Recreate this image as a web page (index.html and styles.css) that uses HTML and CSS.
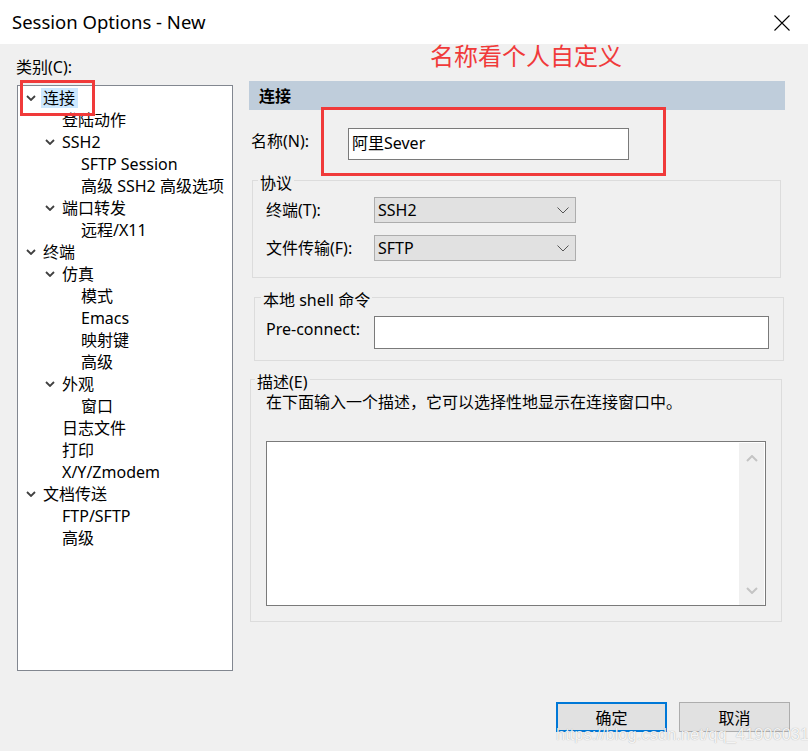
FILE: index.html
```html
<!DOCTYPE html>
<html lang="zh-CN">
<head>
<meta charset="utf-8">
<title>Session Options - New</title>
<link rel="stylesheet" href="styles.css">
</head>
<body>
<div class="window">
  <header class="titlebar">
    <span class="title">Session Options - New</span>
    <span class="close"><svg width="16" height="16" viewBox="0 0 16 16"><path d="M0.5 0.5 L15.5 15.5 M15.5 0.5 L0.5 15.5" stroke="#000" stroke-width="1.1" fill="none"/></svg></span>
  </header>

  <main class="content">
    <section class="category">
      <div class="cat-label">类别(C):</div>
      <div class="tree">
        <div class="row lvl0"><span class="chev"><svg width="10" height="6" viewBox="0 0 10 6"><path d="M1 1 L5 5 L9 1" stroke="#404040" stroke-width="1.8" fill="none"/></svg></span><span class="sel">连接</span></div>
        <div class="row lvl1"><span class="sp"></span>登陆动作</div>
        <div class="row lvl1"><span class="chev"><svg width="10" height="6" viewBox="0 0 10 6"><path d="M1 1 L5 5 L9 1" stroke="#404040" stroke-width="1.8" fill="none"/></svg></span>SSH2</div>
        <div class="row lvl2"><span class="sp"></span>SFTP Session</div>
        <div class="row lvl2"><span class="sp"></span>高级 SSH2 高级选项</div>
        <div class="row lvl1"><span class="chev"><svg width="10" height="6" viewBox="0 0 10 6"><path d="M1 1 L5 5 L9 1" stroke="#404040" stroke-width="1.8" fill="none"/></svg></span>端口转发</div>
        <div class="row lvl2"><span class="sp"></span>远程/X11</div>
        <div class="row lvl0"><span class="chev"><svg width="10" height="6" viewBox="0 0 10 6"><path d="M1 1 L5 5 L9 1" stroke="#404040" stroke-width="1.8" fill="none"/></svg></span>终端</div>
        <div class="row lvl1"><span class="chev"><svg width="10" height="6" viewBox="0 0 10 6"><path d="M1 1 L5 5 L9 1" stroke="#404040" stroke-width="1.8" fill="none"/></svg></span>仿真</div>
        <div class="row lvl2"><span class="sp"></span>模式</div>
        <div class="row lvl2"><span class="sp"></span>Emacs</div>
        <div class="row lvl2"><span class="sp"></span>映射键</div>
        <div class="row lvl2"><span class="sp"></span>高级</div>
        <div class="row lvl1"><span class="chev"><svg width="10" height="6" viewBox="0 0 10 6"><path d="M1 1 L5 5 L9 1" stroke="#404040" stroke-width="1.8" fill="none"/></svg></span>外观</div>
        <div class="row lvl2"><span class="sp"></span>窗口</div>
        <div class="row lvl1"><span class="sp"></span>日志文件</div>
        <div class="row lvl1"><span class="sp"></span>打印</div>
        <div class="row lvl1"><span class="sp"></span>X/Y/Zmodem</div>
        <div class="row lvl0"><span class="chev"><svg width="10" height="6" viewBox="0 0 10 6"><path d="M1 1 L5 5 L9 1" stroke="#404040" stroke-width="1.8" fill="none"/></svg></span>文档传送</div>
        <div class="row lvl1"><span class="sp"></span>FTP/SFTP</div>
        <div class="row lvl1"><span class="sp"></span>高级</div>
      </div>
    </section>

    <section class="panel">
      <div class="panel-head">连接</div>
      <div class="name-row">
        <label class="lbl name-lbl">名称(N):</label>
        <div class="textbox name-box">阿里Sever</div>
      </div>

      <fieldset class="group g-proto">
        <legend>协议</legend>
        <div class="field">
          <label class="lbl field-lbl">终端(T):</label>
          <div class="combo"><span>SSH2</span><svg width="12" height="7" viewBox="0 0 12 7"><path d="M0.5 0.5 L6 6 L11.5 0.5" stroke="#555" stroke-width="1" fill="none"/></svg></div>
        </div>
        <div class="field">
          <label class="lbl field-lbl">文件传输(F):</label>
          <div class="combo"><span>SFTP</span><svg width="12" height="7" viewBox="0 0 12 7"><path d="M0.5 0.5 L6 6 L11.5 0.5" stroke="#555" stroke-width="1" fill="none"/></svg></div>
        </div>
      </fieldset>

      <fieldset class="group g-shell">
        <legend>本地 shell 命令</legend>
        <div class="field">
          <label class="lbl field-lbl pre-lbl">Pre-connect:</label>
          <div class="textbox pre-box"></div>
        </div>
      </fieldset>

      <fieldset class="group g-desc">
        <legend>描述(E)</legend>
        <div class="desc-text">在下面输入一个描述，它可以选择性地显示在连接窗口中。</div>
        <div class="memo">
          <div class="memo-area"></div>
          <div class="vscroll">
            <svg width="12" height="7" viewBox="0 0 12 7"><path d="M1 6 L6 1 L11 6" stroke="#c4c4c4" stroke-width="2" fill="none"/></svg>
            <svg width="12" height="7" viewBox="0 0 12 7"><path d="M1 1 L6 6 L11 1" stroke="#c4c4c4" stroke-width="2" fill="none"/></svg>
          </div>
        </div>
      </fieldset>
    </section>
  </main>

  <footer class="buttons">
    <button class="btn btn-default">确定</button>
    <button class="btn">取消</button>
  </footer>

  <div class="annotation">名称看个人自定义</div>
  <div class="mark mark-tree"></div>
  <div class="mark mark-name"></div>
  <div class="watermark">https://blog.csdn.net/qq_41906031</div>
</div>
</body>
</html>
```

FILE: styles.css
```css
* { box-sizing: border-box; }

html, body {
  margin: 0;
  padding: 0;
}

body {
  background: #f0f0f0;
  font-family: "Noto Sans", "Noto Sans CJK SC", sans-serif;
  font-size: 16px;
  line-height: 20px;
  color: #000;
}

.window {
  position: relative;
  width: 808px;
  height: 751px;
  overflow: hidden;
  display: flex;
  flex-direction: column;
}

.titlebar {
  height: 44px;
  background: #fff;
  display: flex;
  align-items: center;
  justify-content: space-between;
  padding: 0 18px 0 12px;
  flex: none;
}

.title {
  font-size: 18.5px;
  line-height: 24px;
}

.close {
  display: flex;
  padding-top: 1px;
}

.content {
  display: flex;
  padding: 13px 0 0 16px;
  height: 627px;
  flex: none;
}

.category {
  width: 217px;
  display: flex;
  flex-direction: column;
}

.cat-label {
  height: 20px;
}

.tree {
  margin: 8px 0 0 1px;
  width: 216px;
  height: 586px;
  background: #fff;
  border: 1px solid #828790;
  padding-top: 1px;
}

.row {
  height: 22px;
  display: flex;
  align-items: center;
  white-space: nowrap;
}

.lvl0 { padding-left: 8px; }
.lvl1 { padding-left: 27px; }
.lvl2 { padding-left: 46px; }

.chev, .sp {
  width: 17px;
  flex: none;
  display: flex;
  align-items: center;
}

.sel {
  background: #cce8ff;
  margin-left: -2px;
  padding: 0 3px 0 2px;
}

.panel {
  width: 536px;
  margin: 24px 0 0 16px;
}

.panel-head {
  height: 29px;
  background: #bfcddb;
  font-weight: bold;
  padding-left: 10px;
  display: flex;
  align-items: center;
}

.name-row {
  display: flex;
  align-items: center;
  margin-top: 18px;
  padding-left: 2px;
}

.name-lbl {
  width: 97px;
  padding-bottom: 6px;
}

.textbox {
  background: #fff;
  border: 1px solid #7a7a7a;
  display: flex;
  align-items: center;
  padding-left: 3px;
}

.name-box {
  width: 281px;
  height: 32px;
  padding-bottom: 3px;
}

.group {
  margin: 0;
  border: 1px solid #dcdcdc;
  min-width: 0;
}

.group legend {
  padding: 6px 2px 0;
  line-height: 20px;
}

.g-proto {
  margin: 7px 4px 0 3px;
  padding: 4px 12px 16px 13px;
}
.g-proto legend { margin-left: -8px; }

.g-shell {
  margin: 6px 1px 0 5px;
  padding: 6px 14px 11px 11px;
}
.g-shell legend { margin-left: -5px; }

.g-desc {
  margin: 5px 3px 0 1px;
  padding: 0 16px 15px 15px;
}
.g-desc legend { margin-left: -11px; }

.field {
  display: flex;
  align-items: center;
}

.field + .field { margin-top: 12px; }

.field-lbl { width: 108px; }

.pre-lbl { padding-bottom: 8px; }

.combo {
  width: 202px;
  height: 26px;
  background: #e1e1e1;
  border: 1px solid #adadad;
  display: flex;
  align-items: center;
  justify-content: space-between;
  padding: 0 6px 0 3px;
}

.combo svg { margin-top: 1px; }

.pre-box {
  width: 396px;
  height: 33px;
}

.desc-text {
  height: 20px;
}

.memo {
  margin-top: 29px;
  width: 500px;
  height: 165px;
  background: #fff;
  border: 1px solid #7a7a7a;
  display: flex;
  padding: 1px 1px 0 0;
}

.memo-area { flex: 1; }

.vscroll {
  width: 25px;
  background: #f0f0f0;
  display: flex;
  flex-direction: column;
  justify-content: space-between;
  align-items: center;
  padding: 12px 0 11px;
}

.buttons {
  display: flex;
  justify-content: flex-end;
  gap: 12px;
  padding: 31px 18px 0 0;
}

.btn {
  width: 111px;
  height: 30px;
  background: #e1e1e1;
  border: 1px solid #adadad;
  font-family: "Noto Sans CJK SC", sans-serif;
  font-size: 16px;
  color: #000;
  padding: 0;
}

.btn-default {
  border: 2px solid #0078d7;
}

.annotation {
  position: absolute;
  left: 430px;
  top: 41px;
  font-family: "Noto Sans CJK SC", sans-serif;
  font-size: 24px;
  line-height: 28px;
  color: #f03a3a;
}

.mark {
  position: absolute;
  border: 3px solid #f03a3a;
}

.mark-tree {
  left: 20px;
  top: 80px;
  width: 75px;
  height: 36px;
}

.mark-name {
  left: 321px;
  top: 107px;
  width: 345px;
  height: 69px;
}

.watermark {
  position: absolute;
  left: 556px;
  top: 723px;
  font-family: "Liberation Sans", sans-serif;
  font-size: 16.5px;
  line-height: 22px;
  color: rgba(255, 255, 255, 0.9);
  text-shadow: 0 0 1px rgba(0, 0, 0, 0.35);
  white-space: nowrap;
}
```
